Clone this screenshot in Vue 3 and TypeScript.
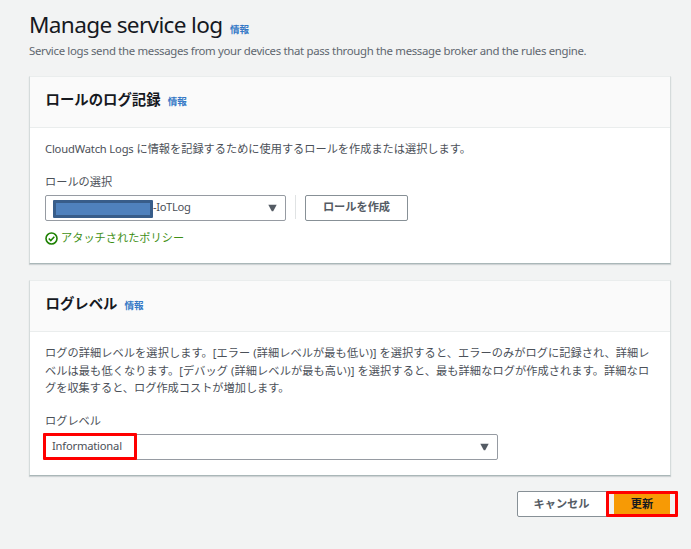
<script setup lang="ts">
const roleSuffix = '-IoTLog'
const logLevel = 'Informational'
</script>

<template>
  <main class="page">
    <header class="page-header">
      <h1><span class="h1-text">Manage service log</span><a class="info">情報</a></h1>
      <p class="description">Service logs send the messages from your devices that pass through the message broker and the rules engine.</p>
    </header>

    <section class="card role-card">
      <div class="card-header"><h2>ロールのログ記録</h2><a class="info">情報</a></div>
      <div class="card-body">
        <p class="text"><span class="latin">CloudWatch Logs</span> に情報を記録するために使用するロールを作成または選択します。</p>
        <div class="label role-label">ロールの選択</div>
        <div class="role-row">
          <div class="select role-select">
            <span class="mask"></span>
            <span class="role-value">{{ roleSuffix }}</span>
            <svg class="caret" viewBox="0 0 9 8"><path d="M.3.7h8.4L5.2 7.2H3.8z" /></svg>
          </div>
          <span class="divider"></span>
          <button class="button create">ロールを作成</button>
        </div>
        <div class="status">
          <svg viewBox="0 0 13 13"><circle cx="6.5" cy="6.5" r="5.5" /><path d="M3.8 6.5l2 2 3.5-3.7" /></svg>
          <span>アタッチされたポリシー</span>
        </div>
      </div>
    </section>

    <section class="card level-card">
      <div class="card-header"><h2>ログレベル</h2><a class="info">情報</a></div>
      <div class="card-body">
        <p class="text">
          <span class="line first">ログの詳細レベルを選択します。[エラー (詳細レベルが最も低い)] を選択すると、エラーのみがログに記録され、詳細レ</span>
          <span class="line second">ベルは最も低くなります。[デバッグ (詳細レベルが最も高い)] を選択すると、最も詳細なログが作成されます。詳細なロ</span>
          <span class="line">グを収集すると、ログ作成コストが増加します。</span>
        </p>
        <div class="label level-label">ログレベル</div>
        <div class="select level-select">
          <span class="level-value">{{ logLevel }}</span>
          <svg class="caret" viewBox="0 0 9 8"><path d="M.3.7h8.4L5.2 7.2H3.8z" /></svg>
          <span class="highlight level-highlight"></span>
        </div>
      </div>
    </section>

    <footer class="actions">
      <button class="button cancel">キャンセル</button>
      <div class="update-wrap">
        <button class="update">更新</button>
        <span class="highlight update-highlight"></span>
      </div>
    </footer>
  </main>
</template>

<style>
body { margin: 0; background: #f2f3f3; overflow: hidden; }
</style>

<style scoped>
* { box-sizing: border-box; }
.page {
  width: 691px;
  height: 549px;
  padding: 11px 20px 0 29px;
  background: #f2f3f3;
  color: #4b5058;
  font: 11.2px/17.6px "Noto Sans", "Noto Sans CJK JP", sans-serif;
  white-space: nowrap;
}
h1, h2, p { margin: 0; }
.page-header { height: 65px; }
h1 { display: flex; align-items: baseline; height: 30px; font-size: 22.6px; line-height: 27px; font-weight: 400; color: #16191f; }
.h1-text { width: 201px; letter-spacing: -0.66px; }
.info { color: #3478c6; font-size: 9.6px; line-height: 14px; font-weight: 700; }
.description { padding-top: 1px; color: #60676f; font-size: 11.4px; letter-spacing: -0.325px; }
.card { width: 642px; background: #fff; border: 1px solid #d5dbdb; border-top-color: #eaeded; border-bottom: 1px solid #aab7b8; box-shadow: 0 1px 1px #cfd3d5; }
.role-card { height: 188px; margin-bottom: 16px; }
.level-card { height: 196px; }
.card-header { display: flex; align-items: baseline; height: 51px; padding: 13px 15px 0; background: #fafafa; border-bottom: 1px solid #eaeded; }
h2 { color: #16191f; font-size: 14.4px; line-height: 20px; font-weight: 700; margin-right: 7px; }
.card-body { padding: 12px 15px 0 16px; }
.card-header { padding-left: 15.5px; }
.role-card .card-body, .level-card .card-body { padding-left: 15px; }
.latin { letter-spacing: -0.17px; }
.label { line-height: 18px; }
.role-label { margin-top: 15.5px; }
.role-row { display: flex; margin-top: 3.5px; }
.select { position: relative; display: flex; align-items: center; height: 26px; border: 1px solid #969ba2; border-radius: 2px; background: #fff; }
.role-select { width: 241px; padding: 0 8px 0 7px; }
.mask { width: 100px; height: 18px; margin-top: 2px; border: 3px solid #385d8a; border-radius: 1px; background: #4f81bd; }
.role-value { line-height: 16px; margin-bottom: 1px; letter-spacing: -0.35px; }
.caret { width: 9px; height: 8px; margin-left: auto; fill: #545b64; }
.divider { width: 1px; height: 24px; margin: 0 9px; background: #e0e3e4; }
.button { height: 26px; padding: 0 0 1px; border: 1px solid #879096; border-radius: 2px; background: #fff; color: #545b64; font: inherit; font-weight: 700; line-height: 22px; }
.create { width: 103px; }
.status { display: flex; align-items: center; height: 18px; margin-top: 8px; gap: 3px; color: #3f8f16; }
.status svg { width: 13px; height: 13px; margin-top: 2px; fill: none; stroke: #1d8102; stroke-width: 1.6; }
.line { display: block; width: max-content; }
.first { letter-spacing: 0.075px; }
.second { letter-spacing: 0.09px; }
.level-label { margin-top: 15px; }
.level-select { width: 453px; margin-top: 4px; padding: 0 8px 0 6px; }
.level-value { line-height: 18px; margin-bottom: 2px; letter-spacing: -0.2px; }
.highlight { position: absolute; border: 3px solid #f00; border-radius: 1px; pointer-events: none; }
.level-highlight { left: -3px; top: -2px; width: 94px; height: 27px; }
.actions { display: flex; justify-content: flex-end; padding: 15px 1px 0 0; }
.cancel { width: 91px; padding-right: 2px; }
.update-wrap { position: relative; width: 62px; padding: 0 0 0 6px; }
.update { display: block; width: 56px; height: 26px; padding: 0 0 1px; border: 0; background: #f79a05; color: #16191f; font: inherit; font-weight: 700; line-height: 22px; }
.update-highlight { left: -2px; top: 0; width: 72px; height: 26px; }
</style>
